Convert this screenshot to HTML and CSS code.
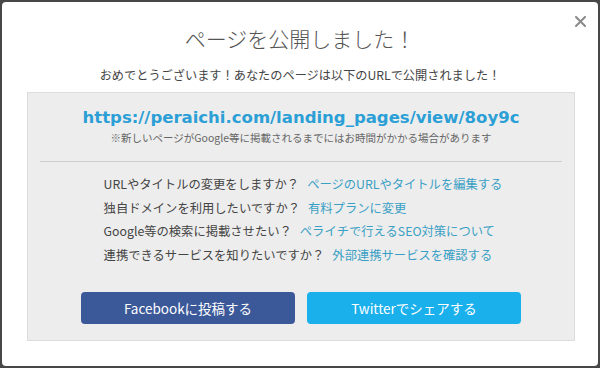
FILE: index.html
```html
<!DOCTYPE html>
<html lang="ja">
<head>
    <meta charset="UTF-8">
    <meta name="viewport" content="width=device-width, initial-scale=1.0">
    <title>ページを公開しました！</title>
    <link rel="stylesheet" href="styles.css">
</head>
<body>
    <div class="modal">
        <button class="close" aria-label="閉じる">
            <svg width="11" height="11" viewBox="0 0 11 11">
                <path d="M1 1 L10 10 M10 1 L1 10" stroke="#8a8a8a" stroke-width="2" stroke-linecap="round"/>
            </svg>
        </button>

        <h1 class="title">ページを公開しました！</h1>
        <p class="lead">おめでとうございます！あなたのページは以下のURLで公開されました！</p>

        <div class="panel">
            <div class="url-block">
                <a class="url" href="#">https://peraichi.com/landing_pages/view/8oy9c</a>
                <p class="note">※新しいページがGoogle等に掲載されるまでにはお時間がかかる場合があります</p>
            </div>

            <hr class="divider">

            <ul class="faq">
                <li>URLやタイトルの変更をしますか？<a href="#">ページのURLやタイトルを編集する</a></li>
                <li>独自ドメインを利用したいですか？<a href="#">有料プランに変更</a></li>
                <li>Google等の検索に掲載させたい？<a href="#">ペライチで行えるSEO対策について</a></li>
                <li>連携できるサービスを知りたいですか？<a href="#">外部連携サービスを確認する</a></li>
            </ul>

            <div class="share">
                <button class="btn btn-facebook">Facebookに投稿する</button>
                <button class="btn btn-twitter">Twitterでシェアする</button>
            </div>
        </div>
    </div>
</body>
</html>
```

FILE: styles.css
```css
body {
    margin: 0;
    background-color: #474747;
    font-family: "Noto Sans CJK JP", "Noto Sans", sans-serif;
    color: #444;
}

.modal {
    position: relative;
    box-sizing: border-box;
    width: 596px;
    height: 364px;
    margin: 2px;
    padding-top: 21px;
    background-color: #fff;
    border-radius: 4px;
}

.close {
    position: absolute;
    top: 13px;
    right: 12px;
    padding: 0;
    border: none;
    background: none;
    cursor: pointer;
}

.title {
    margin: 0;
    font-size: 21px;
    font-weight: 300;
    line-height: 30px;
    text-align: center;
    color: #555;
}

.lead {
    margin: 12px 0 0;
    font-size: 12.2px;
    line-height: 20px;
    text-align: center;
    color: #444;
}

.panel {
    margin: 7px 23px 0 25px;
    padding: 13px 0 16px;
    border: 1px solid #dcdcdc;
    background-color: #ededed;
}

.url-block {
    text-align: center;
}

.url {
    display: block;
    font-family: "DejaVu Sans", Verdana, sans-serif;
    font-size: 16.5px;
    font-weight: bold;
    line-height: 24px;
    color: #2c9fd6;
    text-decoration: none;
}

.note {
    margin: 0;
    font-size: 10.5px;
    line-height: 16px;
    color: #666;
}

.divider {
    margin: 15px 12px 0;
    border: none;
    border-top: 1px solid #cfcfcf;
}

.faq {
    width: fit-content;
    margin: 11px auto 0;
    padding: 0 0 0 4px;
    list-style: none;
    font-size: 12.3px;
    line-height: 23.5px;
    color: #444;
}

.faq a {
    margin-left: 8px;
    color: #3a9fc4;
    text-decoration: none;
}

.share {
    display: flex;
    justify-content: center;
    gap: 12px;
    margin-top: 25px;
}

.btn {
    width: 214px;
    height: 32px;
    border: none;
    border-radius: 4px;
    font-family: "Noto Sans CJK JP", "Noto Sans", sans-serif;
    font-size: 13.5px;
    color: #fff;
    cursor: pointer;
}

.btn-facebook {
    background-color: #3b5899;
}

.btn-twitter {
    background-color: #1ab0ec;
}
```
